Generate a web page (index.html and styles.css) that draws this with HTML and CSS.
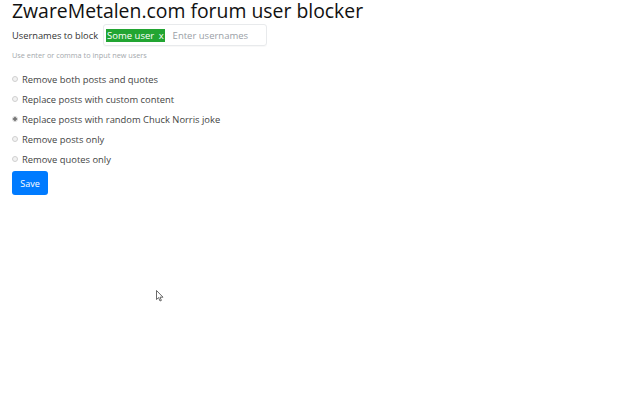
FILE: index.html
```html
<!DOCTYPE html>
<html>
<head>
<meta charset="utf-8">
<link rel="stylesheet" href="styles.css">
</head>
<body>
<div class="page">
  <h1 class="title">ZwareMetalen.com forum user blocker</h1>
  <div class="field">
    <label class="field-label">Usernames to block</label>
    <div class="tags-input">
      <span class="tag">Some user <span class="tag-x">x</span></span>
      <span class="placeholder">Enter usernames</span>
    </div>
  </div>
  <div class="help">Use enter or comma to input new users</div>
  <div class="options">
    <label class="option"><input type="radio" name="mode" class="radio"> Remove both posts and quotes</label>
    <label class="option"><input type="radio" name="mode" class="radio"> Replace posts with custom content</label>
    <label class="option"><input type="radio" name="mode" class="radio" checked> Replace posts with random Chuck Norris joke</label>
    <label class="option"><input type="radio" name="mode" class="radio"> Remove posts only</label>
    <label class="option"><input type="radio" name="mode" class="radio"> Remove quotes only</label>
  </div>
  <button class="save">Save</button>
</div>
<svg class="cursor" width="8" height="12" viewBox="0 0 8 12"><path d="M0.5 0.5 L0.5 9.5 L2.6 7.6 L4 11 L5.4 10.4 L4 7.2 L7 7.2 Z" fill="#fff" stroke="#444" stroke-width="0.8"/></svg>
</body>
</html>
```
FILE: styles.css
```css
html, body { margin: 0; padding: 0; background: #fff; }
body { font-family: "Open Sans", "Noto Sans", sans-serif; color: #212529; width: 640px; height: 400px; overflow: hidden; position: relative; }
.page { padding: 0 12px; }
.title { font-size: 19.4px; font-weight: 400; margin: 0; line-height: 22px; color: #111; }
.field { display: flex; align-items: center; margin-top: 2px; gap: 5px; }
.field-label { font-size: 9.3px; color: #333; }
.tags-input { display: flex; align-items: center; width: 160px; height: 20px; border: 1px solid #e8eaec; border-radius: 3px; padding-left: 2px; box-shadow: 0 1px 1px rgba(0,0,0,0.03); }
.tag { background: #22a532; color: #fff; font-size: 9.5px; line-height: 13px; padding: 0 1px; height: 13px; }
.tag-x { margin-left: 2px; }
.placeholder { font-size: 9.5px; color: #9aa0a6; margin-left: 8px; }
.help { font-size: 7.3px; color: #a4a8ac; margin-top: 4px; }
.options { display: flex; flex-direction: column; margin-top: 9px; }
.option { display: flex; align-items: center; height: 20px; font-size: 9.4px; color: #444; }
.radio { appearance: none; -webkit-appearance: none; width: 6px; height: 6px; margin: 0 4px 0 0; border: 1px solid #d0d0d0; border-radius: 50%; background: #f2f2f2; }
.radio:checked { background: radial-gradient(circle, #777 0 1.6px, #f2f2f2 2px); }
.save { margin-top: 2px; background: #007bff; color: #fff; border: 0; border-radius: 3px; font-family: inherit; font-size: 9px; width: 36px; height: 24px; padding: 0; }
.cursor { position: absolute; left: 156px; top: 290px; }
```
